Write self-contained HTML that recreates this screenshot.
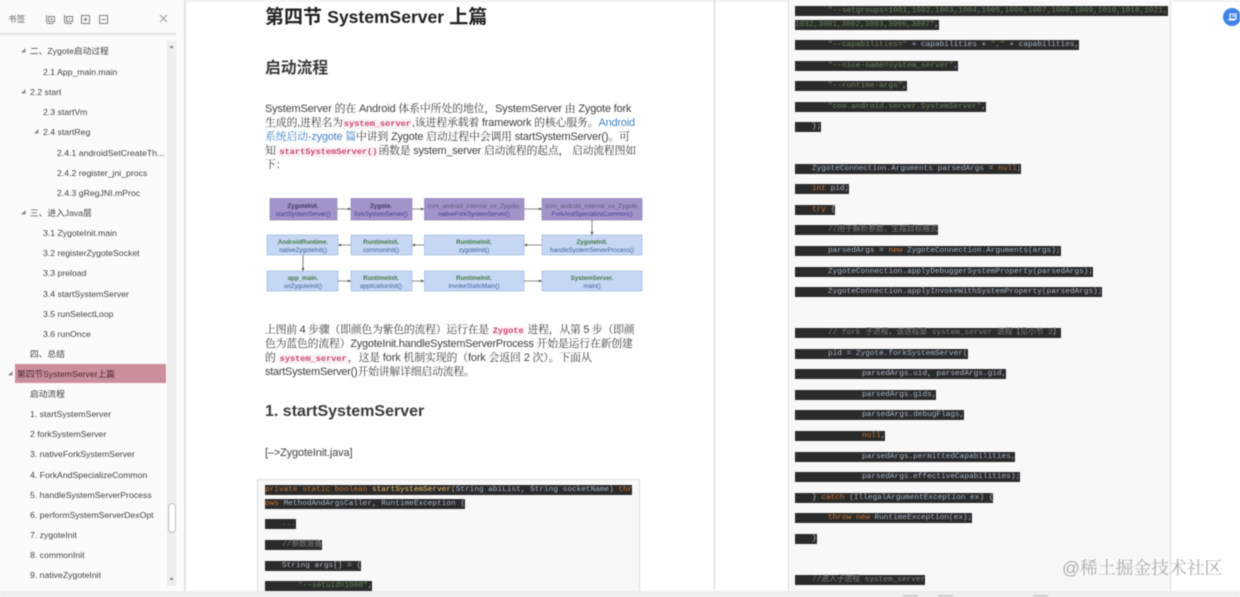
<!DOCTYPE html>
<html><head><meta charset="utf-8"><style>
html,body{margin:0;padding:0;background:#fff}
#r{position:relative;width:1240px;height:597px;overflow:hidden;background:#fff;filter:blur(.5px)}
#r div{position:absolute;white-space:pre}
.s{font:8.7px/12px "Liberation Sans","Noto Sans CJK SC",sans-serif;color:#444}
.t{font-size:4.5px;color:#888}
.p{font:10.9px/14px "Liberation Sans","Noto Serif CJK SC",serif;color:#3f3f3f;left:265px;letter-spacing:-.1px}
.p i{font:700 8.6px/14px "Liberation Mono",monospace;color:#d0426e;background:#f9f2f4;padding:0 1px;letter-spacing:0}
.p b{font-weight:400;color:#4183c4}
.c{font:7.75px/10.4px "Liberation Mono","Noto Sans CJK SC",monospace;background:#2b2b2b;color:#a9b7c6;height:10.4px}
.c em{font-style:normal;color:#cc7832}.c u{text-decoration:none;color:#6a8759}.c s{text-decoration:none;color:#808080}.c q{quotes:none;color:#ffc66d}
.c b{display:inline-block;width:17px;font-weight:400}.c b.e{width:33px}.c b.x{width:67px}
</style></head><body><div id="r">
<!-- chrome -->
<div style="left:0;top:0;width:1240px;height:2px;background:#f2f2f2"></div>
<div style="left:0;top:0;width:184px;height:591px;background:#fbfbfb"></div>
<div style="left:184px;top:0;width:1.5px;height:591px;background:#e3e3e3"></div>
<div style="left:714px;top:0;width:1px;height:591px;background:#d4d4d4"></div>
<div style="left:0;top:591px;width:1240px;height:6px;background:#eeeeee"></div>
<div style="left:903px;top:595px;width:15px;height:2px;background:#ccc"></div>
<div style="left:938px;top:595px;width:15px;height:2px;background:#ccc"></div>
<div style="left:1033px;top:595px;width:15px;height:2px;background:#ccc"></div>
<!-- sidebar head -->
<div class="s" style="left:8px;top:13px;color:#666;font-size:8.6px">书签</div>
<svg style="position:absolute;left:44px;top:13px" width="70" height="13" fill="none" stroke="#808080" stroke-width="1">
<path d="M2.500 2v8M4.500 3.500h6v5h-6zM6.500 6h2M7.500 5v2M3 10.500h7"/>
<path d="M20.500 2v8M22.500 3.500h6v5h-6zM24.500 6h2M21 10.500h7"/>
<path d="M37.500 2.500h8v8h-8zM39.500 6.500h4M41.500 4.500v4"/>
<path d="M55.500 2.500h8v8h-8zM57.500 6.500h4"/>
</svg>
<svg style="position:absolute;left:159px;top:14px" width="9" height="9" stroke="#999" stroke-width="1"><path d="M1 1l7 7M8 1L1 8"/></svg>
<div style="left:0;top:33px;width:176px;height:1.500px;background:#e2e2e2"></div>
<!-- scrollbar -->
<div style="left:167px;top:41px;width:9px;height:545px;background:#eeeeee"></div>
<div style="left:168px;top:503px;width:8px;height:30px;background:#fff;border:1px solid #bdbdbd;border-radius:4px;box-sizing:border-box"></div>
<div style="left:170px;top:46px;width:3px;height:2px;background:#888"></div>
<div style="left:170px;top:578px;width:3px;height:2px;background:#888"></div>
<!-- highlight -->
<div style="left:15px;top:364px;width:151px;height:19px;background:#cb8f9b"></div>
<!-- tree -->
<div class="s t" style="left:21px;top:45px">◢</div>
<div class="s" style="left:30px;top:45px">二、Zygote启动过程</div>
<div class="s" style="left:43px;top:66px">2.1 App_main.main</div>
<div class="s t" style="left:21px;top:86px">◢</div>
<div class="s" style="left:30px;top:86px">2.2 start</div>
<div class="s" style="left:43px;top:106px">2.3 startVm</div>
<div class="s t" style="left:34px;top:126px">◢</div>
<div class="s" style="left:43px;top:126px">2.4 startReg</div>
<div class="s" style="left:57px;top:147px">2.4.1 androidSetCreateTh...</div>
<div class="s" style="left:57px;top:167px">2.4.2 register_jni_procs</div>
<div class="s" style="left:57px;top:187px">2.4.3 gRegJNI.mProc</div>
<div class="s t" style="left:21px;top:207px">◢</div>
<div class="s" style="left:30px;top:207px">三、进入Java层</div>
<div class="s" style="left:43px;top:227px">3.1 ZygoteInit.main</div>
<div class="s" style="left:43px;top:247px">3.2 registerZygoteSocket</div>
<div class="s" style="left:43px;top:267px">3.3 preload</div>
<div class="s" style="left:43px;top:288px">3.4 startSystemServer</div>
<div class="s" style="left:43px;top:308px">3.5 runSelectLoop</div>
<div class="s" style="left:43px;top:328px">3.6 runOnce</div>
<div class="s" style="left:30px;top:348px">四、总结</div>
<div class="s t" style="left:8px;top:368px">◢</div>
<div class="s" style="left:17px;top:368px;color:#4a2a30">第四节SystemServer上篇</div>
<div class="s" style="left:30px;top:388px">启动流程</div>
<div class="s" style="left:30px;top:408px">1. startSystemServer</div>
<div class="s" style="left:30px;top:428px">2 forkSystemServer</div>
<div class="s" style="left:30px;top:448px">3. nativeForkSystemServer</div>
<div class="s" style="left:30px;top:469px">4. ForkAndSpecializeCommon</div>
<div class="s" style="left:30px;top:489px">5. handleSystemServerProcess</div>
<div class="s" style="left:30px;top:509px">6. performSystemServerDexOpt</div>
<div class="s" style="left:30px;top:529px">7. zygoteInit</div>
<div class="s" style="left:30px;top:549px">8. commonInit</div>
<div class="s" style="left:30px;top:569px">9. nativeZygoteInit</div>
<!-- article -->
<div style="left:265px;top:3px;font:700 19px/28px 'Liberation Sans','Noto Sans CJK SC',sans-serif;color:#222">第四节 <span style="font-size:17.5px">SystemServer</span> 上篇</div>
<div style="left:265px;top:58px;font:700 15.800px/22px 'Liberation Sans','Noto Sans CJK SC',sans-serif;color:#3a3a3a">启动流程</div>
<div class="p" style="top:102px;letter-spacing:-.14px">SystemServer 的在 Android 体系中所处的地位，SystemServer 由 Zygote fork</div>
<div class="p" style="top:116px;letter-spacing:-.17px">生成的,进程名为<i>system_server</i>,该进程承载着 framework 的核心服务。<b>Android</b></div>
<div class="p" style="top:130px;letter-spacing:-.17px"><b>系统启动-zygote 篇</b>中讲到 Zygote 启动过程中会调用 startSystemServer()。可</div>
<div class="p" style="top:144px;letter-spacing:-.23px">知 <i>startSystemServer()</i>函数是 system_server 启动流程的起点， 启动流程图如</div>
<div class="p" style="top:158px">下：</div>
<!-- diagram -->
<svg style="position:absolute;left:260px;top:190px" width="390" height="110" font-family="Liberation Sans" font-size="6.200" text-anchor="middle">
<g fill="#a293ca" stroke="#8f83b6" stroke-width=".7">
<rect x="10" y="8.500" width="67" height="21.500"/><rect x="91" y="8.500" width="61" height="21.500"/><rect x="164.500" y="8.500" width="99.500" height="21.500"/><rect x="282" y="8.500" width="100" height="21.500"/></g>
<g fill="#c6d7f3" stroke="#9dbbe0" stroke-width=".7">
<rect x="7" y="45" width="71" height="20"/><rect x="91" y="45" width="61" height="20"/><rect x="164.500" y="45" width="99.500" height="20"/><rect x="282" y="45" width="100" height="20"/>
<rect x="7" y="81" width="71" height="20"/><rect x="91" y="81" width="61" height="20"/><rect x="164.500" y="81" width="99.500" height="20"/><rect x="282" y="81" width="100" height="20"/></g>
<g stroke="#666" stroke-width=".8" fill="none">
<path d="M77 19h14M152 19h12M264 19h18M332 30v15M282 55h-18M164 55h-12M91 55H78M43 65v16M78 91h13M152 91h12M264 91h18"/></g>
<g fill="#555" stroke="none"><path d="M91 19l-3-1.500v3zM164 19l-3-1.500v3zM282 19l-3-1.500v3zM332 45l-1.500-3h3zM264 55l3-1.500v3zM152 55l3-1.500v3zM78 55l3-1.500v3zM43 81l-1.500-3h3zM91 91l-3-1.500v3zM164 91l-3-1.500v3zM282 91l-3-1.500v3z"/></g>
<g fill="#3f3566"><text x="43" y="18" font-weight="700">ZygoteInit.</text><text x="121" y="18" font-weight="700">Zygote.</text></g>
<g fill="#3d3f8f"><text x="43" y="26">startSystemServer()</text><text x="121" y="26">forkSystemServer()</text><text x="214" y="26">nativeForkSystemServer()</text><text x="332" y="26">ForkAndSpecializeCommon()</text></g>
<g fill="#5c5a80"><text x="214" y="18">com_android_internal_os_Zygote.</text><text x="332" y="18">com_android_internal_os_Zygote.</text></g>
<g fill="#3f7a45" font-weight="700"><text x="43" y="54">AndroidRuntime.</text><text x="121" y="54">RuntimeInit.</text><text x="214" y="54">RuntimeInit.</text><text x="332" y="54">ZygoteInit.</text>
<text x="43" y="90">app_main.</text><text x="121" y="90">RuntimeInit.</text><text x="214" y="90">RuntimeInit.</text><text x="332" y="90">SystemServer.</text></g>
<g fill="#3b5f9f"><text x="43" y="62">nativeZygoteInit()</text><text x="121" y="62">commonInit()</text><text x="214" y="62">zygoteInit()</text><text x="332" y="62">handleSystemServerProcess()</text>
<text x="43" y="98">onZygoteInit()</text><text x="121" y="98">applicationInit()</text><text x="214" y="98">invokeStaticMain()</text><text x="332" y="98">main()</text></g>
</svg>
<div class="p" style="top:322.500px;letter-spacing:-.26px">上图前 4 步骤（即颜色为紫色的流程）运行在是 <i>Zygote</i> 进程，从第 5 步（即颜</div>
<div class="p" style="top:336.500px;letter-spacing:-.22px">色为蓝色的流程）ZygoteInit.handleSystemServerProcess 开始是运行在新创建</div>
<div class="p" style="top:350.500px;letter-spacing:-.13px">的 <i>system_server</i>，这是 fork 机制实现的（fork 会返回 2 次）。下面从</div>
<div class="p" style="top:364.500px;letter-spacing:-.23px">startSystemServer()开始讲解详细启动流程。</div>
<div style="left:265px;top:401px;font:700 16px/22px 'Liberation Sans',sans-serif;color:#3a3a3a">1. startSystemServer</div>
<div class="p" style="top:445.500px">[–&gt;ZygoteInit.java]</div>
<!-- code boxes -->
<div style="left:257px;top:479px;width:383px;height:112px;background:#f8f8f8;border:1px solid #dedede;border-bottom:0;box-sizing:border-box"></div>
<div style="left:788px;top:0;width:383px;height:591px;background:#f8f8f8;border:1px solid #dedede;border-width:0 1px;box-sizing:border-box"></div>
<!-- left code -->
<div class="c" style="left:265px;top:485px"><em>private static boolean </em><q>startSystemServer</q>(String abiList, String socketName) <em>thr</em></div>
<div class="c" style="left:265px;top:498.500px"><em>ows</em> MethodAndArgsCaller, RuntimeException {</div>
<div class="c" style="left:265px;top:519px"><b></b><s>...</s></div>
<div class="c" style="left:265px;top:540px"><b></b><s>//参数准备</s></div>
<div class="c" style="left:265px;top:560.500px"><b></b>String args[] = {</div>
<div class="c" style="left:265px;top:581px"><b class="e"></b><u>"--setuid=1000"</u>,</div>
<!-- right code -->
<div class="c" style="left:795px;top:6px"><b class="e"></b><u>"--setgroups=1001,1002,1003,1004,1005,1006,1007,1008,1009,1010,1018,1021,</u></div>
<div class="c" style="left:795px;top:19.500px"><u>1032,3001,3002,3003,3006,3007"</u>,</div>
<div class="c" style="left:795px;top:40px"><b class="e"></b><u>"--capabilities="</u> + capabilities + <u>","</u> + capabilities,</div>
<div class="c" style="left:795px;top:60.500px"><b class="e"></b><u>"--nice-name=system_server"</u>,</div>
<div class="c" style="left:795px;top:81px"><b class="e"></b><u>"--runtime-args"</u>,</div>
<div class="c" style="left:795px;top:102px"><b class="e"></b><u>"com.android.server.SystemServer"</u>,</div>
<div class="c" style="left:795px;top:122px"><b></b>};</div>
<div class="c" style="left:795px;top:163.500px"><b></b>ZygoteConnection.Arguments parsedArgs = <em>null</em>;</div>
<div class="c" style="left:795px;top:184px"><b></b><em>int</em> pid;</div>
<div class="c" style="left:795px;top:205px"><b></b><em>try</em> {</div>
<div class="c" style="left:795px;top:225px"><b class="e"></b><s>//用于解析参数，生成目标格式</s></div>
<div class="c" style="left:795px;top:246px"><b class="e"></b>parsedArgs = <em>new</em> ZygoteConnection.Arguments(args);</div>
<div class="c" style="left:795px;top:266.500px"><b class="e"></b>ZygoteConnection.applyDebuggerSystemProperty(parsedArgs);</div>
<div class="c" style="left:795px;top:287px"><b class="e"></b>ZygoteConnection.applyInvokeWithSystemProperty(parsedArgs);</div>
<div class="c" style="left:795px;top:328px"><b class="e"></b><s>// fork 子进程，该进程是 system_server 进程【见小节 2】</s></div>
<div class="c" style="left:795px;top:348.500px"><b class="e"></b>pid = Zygote.forkSystemServer(</div>
<div class="c" style="left:795px;top:369px"><b class="x"></b>parsedArgs.uid, parsedArgs.gid,</div>
<div class="c" style="left:795px;top:389.500px"><b class="x"></b>parsedArgs.gids,</div>
<div class="c" style="left:795px;top:410px"><b class="x"></b>parsedArgs.debugFlags,</div>
<div class="c" style="left:795px;top:431px"><b class="x"></b><em>null</em>,</div>
<div class="c" style="left:795px;top:451.500px"><b class="x"></b>parsedArgs.permittedCapabilities,</div>
<div class="c" style="left:795px;top:472px"><b class="x"></b>parsedArgs.effectiveCapabilities);</div>
<div class="c" style="left:795px;top:492.500px"><b></b>} <em>catch</em> (IllegalArgumentException ex) {</div>
<div class="c" style="left:795px;top:513px"><b class="e"></b><em>throw new</em> RuntimeException(ex);</div>
<div class="c" style="left:795px;top:534px"><b></b>}</div>
<div class="c" style="left:795px;top:574.500px"><b></b><s>//进入子进程 system_server</s></div>
<!-- watermark -->
<div style="left:1062px;top:556px;font:17.800px/24px 'Liberation Sans','Noto Serif CJK SC',serif;color:#adadad">@稀土掘金技术社区</div>
<!-- blue button -->
<svg style="position:absolute;left:1223px;top:8px" width="17" height="18"><circle cx="9" cy="9" r="9" fill="#3f82e8"/><path d="M5 12h7M7 6h6v5H7zM9 8h3" fill="none" stroke="#fff" stroke-width="1.100"/></svg>
</div></body></html>
